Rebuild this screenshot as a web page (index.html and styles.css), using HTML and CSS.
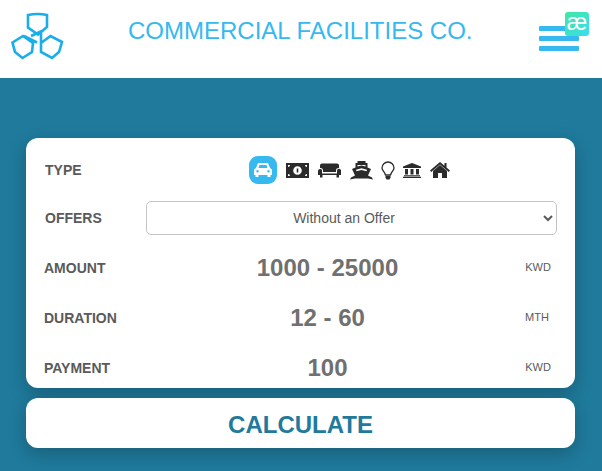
FILE: index.html
```html
<!DOCTYPE html>
<html>
<head>
<meta charset="utf-8"/>
<title>Commercial Facilities Co.</title>
<link rel="stylesheet" href="styles.css">
</head>
<body>

<header class="topbar">
  <svg class="logo" viewBox="10 12 54 50" width="54" height="50">
    <path d="M28 15Q37.500 13 47 15V27L38 34.500L28 27.500Z"/>
    <path d="M12.500 42.500L23 36L33 43L32 52L22.500 58L15 52Z"/>
    <path d="M41 43L50.500 36L62 42L59 52L52 58L41 52V33"/>
    <path d="M24 36L37 42.500M31 36L42 31"/>
  </svg>
  <h1 class="brand">COMMERCIAL FACILITIES CO.</h1>
  <div class="burger"><span></span><span></span><span></span></div>
  <div class="badge">æ</div>
</header>

<main class="content">
  <section class="card">
    <div class="row">
      <label class="name inset">TYPE</label>
      <div class="types">
        <span class="tile">
          <svg viewBox="0 0 20 16" width="20" height="16"><path fill="#fff" fill-rule="evenodd" d="M5 1H15L17 6L19 7.500V13H17.500V15H14.500V13H5.500V15H2.500V13H1V7.500L3 6ZM6.500 3L5.500 6H14.500L13.500 3ZM4.500 8A1.200 1.200 0 1 0 4.500 10.400A1.200 1.200 0 1 0 4.500 8ZM15.500 8A1.200 1.200 0 1 0 15.500 10.400A1.200 1.200 0 1 0 15.500 8Z"/></svg>
        </span>
        <svg class="ico money" viewBox="0 0 23 15" width="23" height="15"><path fill-rule="evenodd" d="M0 0H23V15H0ZM11.500 3.200A4.300 4.300 0 1 0 11.500 11.800A4.300 4.300 0 1 0 11.500 3.200ZM2 2V4A2 2 0 0 0 4 2ZM19 2A2 2 0 0 0 21 4V2ZM2 11V13H4A2 2 0 0 0 2 11ZM21 11A2 2 0 0 0 19 13H21ZM10.700 5.500H12.300V9.500H10.700Z"/></svg>
        <svg class="ico sofa" viewBox="0 0 23 15" width="23" height="15"><path d="M4 0.500H19A2 2 0 0 1 21 2.500V5A2.500 2.500 0 0 0 18 7.500V9H5V7.500A2.500 2.500 0 0 0 2 5V2.500A2 2 0 0 1 4 0.500ZM2.500 6A1.500 1.500 0 0 1 4 7.500V10.500H19V7.500A2 2 0 0 1 23 8V12H21V14.500H18.500V12H4.500V14.500H2V12H0V8A2.200 2.200 0 0 1 2.500 6Z"/></svg>
        <svg class="ico ship" viewBox="0 0 23 19" width="23" height="19"><path fill-rule="evenodd" d="M7.500 0H15.500V2H17.500V6.500L21 8L18 14.500L22 16.500L23 18.500L18 17.500H5L0 18.500L1 16.500L5 14.500L2 8L5.500 6.500V2H7.500ZM7.500 4V5.500L11.500 4.500L15.500 5.500V4ZM6 8.800L6.500 10.300L11.500 9L16.500 10.300L17 8.800L11.500 7.300Z"/></svg>
        <svg class="ico bulb" viewBox="0 0 14 19" width="14" height="19"><path fill="none" stroke-width="1.300" stroke="currentColor" d="M7 1A6 6 0 0 0 1 7C1 9.500 3.500 10.500 4.500 14H9.500C10.500 10.500 13 9.500 13 7A6 6 0 0 0 7 1Z"/><path d="M4.500 15H9.500V16.500L8.500 18.500H5.500L4.500 16.500Z"/></svg>
        <svg class="ico bank" viewBox="0 0 18 15" width="18" height="15"><path d="M9 0L18 3.500V5H0V3.500ZM2 6H5V11.500H2ZM7.500 6H10.500V11.500H7.500ZM13 6H16V11.500H13ZM1 12.300H17V13.300H1ZM0 13.800H18V15H0Z"/></svg>
        <svg class="ico home" viewBox="0 0 20 16" width="20" height="16"><path d="M10 3L17 9V16H12V11H8V16H3V9ZM10 0L14.500 3.800V1H16.500V5.500L20 8.500L18.800 10L10 2.500L1.200 10L0 8.500Z"/></svg>
      </div>
    </div>
    <div class="row">
      <label class="name inset">OFFERS</label>
      <select class="offer"><option>Without an Offer</option></select>
    </div>
    <div class="row">
      <label class="name">AMOUNT</label>
      <div class="value">1000 - 25000</div>
      <div class="unit">KWD</div>
    </div>
    <div class="row">
      <label class="name">DURATION</label>
      <div class="value">12 - 60</div>
      <div class="unit mth">MTH</div>
    </div>
    <div class="row">
      <label class="name">PAYMENT</label>
      <div class="value">100</div>
      <div class="unit">KWD</div>
    </div>
  </section>
  <button class="calc">CALCULATE</button>
</main>

</body>
</html>
```

FILE: styles.css
```css
html, body {
  margin: 0;
  padding: 0;
  height: 471px;
  overflow: hidden;
}

body {
  font-family: "Liberation Sans", Arial, sans-serif;
  background: #1f7a9c;
}

.topbar {
  position: relative;
  display: flex;
  align-items: center;
  height: 78px;
  background: #fff;
}

.logo {
  margin-left: 10px;
  margin-top: -4px;
  flex: none;
}

.logo path {
  fill: none;
  stroke: #19aeea;
  stroke-width: 2.6;
}

.brand {
  margin: -16px 0 0 0;
  padding-left: 64px;
  font-size: 24px;
  font-weight: normal;
  color: #35b9ee;
  white-space: nowrap;
}

.burger {
  margin-left: auto;
  margin-right: 23px;
  margin-top: -1px;
  width: 40px;
  display: flex;
  flex-direction: column;
  gap: 5px;
}

.burger span {
  display: block;
  height: 5px;
  background: #35b9ee;
  border-radius: 1px;
}

.badge {
  position: absolute;
  left: 565px;
  top: 12px;
  width: 24px;
  height: 24px;
  border-radius: 3px;
  background: linear-gradient(135deg, #3fe8a0, #3cdcf0);
  color: #fff;
  font-size: 23px;
  line-height: 21px;
  text-align: center;
}

.content {
  padding: 60px 27px 0 26px;
}

.card {
  height: 250px;
  background: #fff;
  border-radius: 12px;
  box-shadow: 0 6px 18px rgba(0, 0, 0, 0.22);
  padding-left: 18px;
  box-sizing: border-box;
  overflow: hidden;
}

.row {
  display: grid;
  grid-template-columns: 102px 362px 60px;
  align-items: center;
  height: 50px;
}

.row:first-child {
  height: 64px;
  margin-bottom: -1px;
}

.row:nth-child(2) {
  height: 34px;
  margin-bottom: 8px;
}

.name {
  font-size: 14px;
  font-weight: bold;
  color: #5a5a5a;
}

.inset {
  margin-left: 1px;
}

.types {
  grid-column: 2 / 4;
  display: flex;
  align-items: center;
  color: #2b2b2b;
  padding-left: 103px;
}

.tile {
  display: flex;
  align-items: center;
  justify-content: center;
  width: 28px;
  height: 28px;
  border-radius: 9px;
  background: #35b9ee;
  margin-right: 9px;
}

.ico {
  fill: currentColor;
  flex: none;
}

.money, .sofa {
  margin-right: 9px;
}

.ship {
  margin-right: 8px;
}

.bulb {
  margin-right: 8px;
}

.bank {
  margin-right: 9px;
}

.offer {
  grid-column: 2 / 4;
  width: 411px;
  height: 34px;
  padding-right: 3px;
  font-family: inherit;
  font-size: 14px;
  color: #5a5a5a;
  text-align: center;
  background: #fff;
  border: 1px solid #c4c4c4;
  border-radius: 5px;
}

.value {
  padding-left: 1px;
  text-align: center;
  font-size: 24px;
  font-weight: bold;
  color: #707070;
}

.unit {
  text-align: center;
  font-size: 11px;
  color: #5a5a5a;
  padding-bottom: 3px;
}

.mth {
  padding-right: 2px;
}

.calc {
  display: block;
  width: 100%;
  height: 50px;
  margin-top: 10px;
  padding-top: 4px;
  border: 0;
  border-radius: 12px;
  background: #fff;
  box-shadow: 0 6px 18px rgba(0, 0, 0, 0.22);
  font-family: inherit;
  font-size: 24px;
  font-weight: bold;
  color: #1f7a9c;
}
```
